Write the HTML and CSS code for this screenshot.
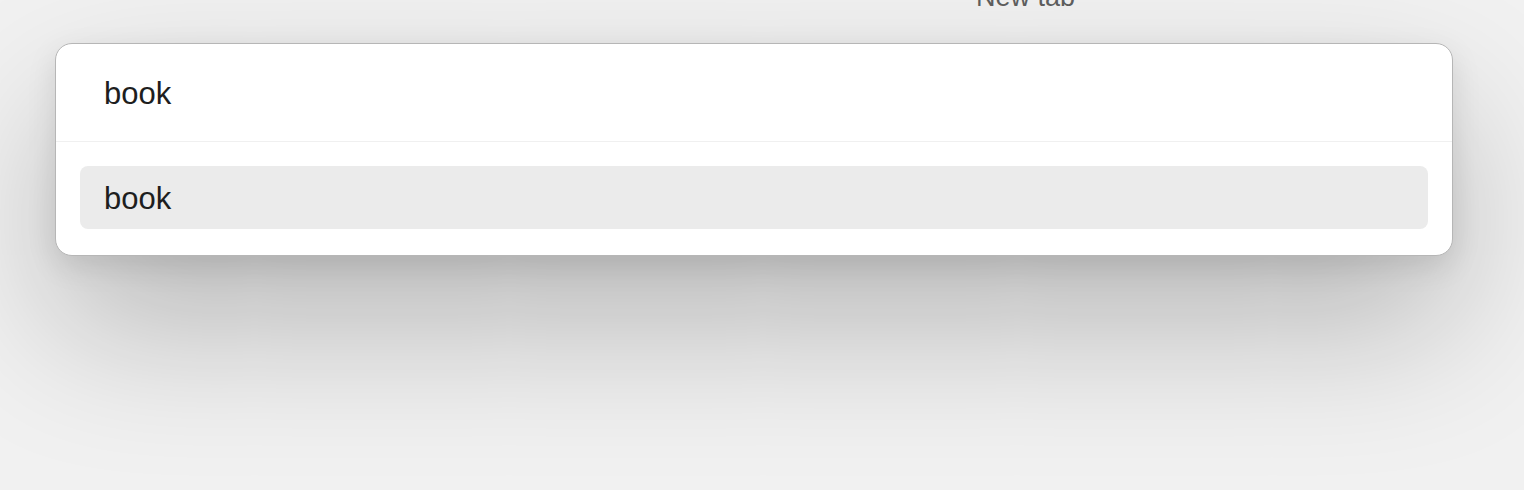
FILE: index.html
```html
<!DOCTYPE html>
<html>
<head>
<meta charset="utf-8">
<link rel="stylesheet" href="styles.css">
</head>
<body>
<div class="page">
  <div class="tabbar"><span class="tab-title">New tab</span></div>
</div>
<div class="palette">
  <div class="palette-input">book</div>
  <div class="palette-list">
    <div class="palette-item selected">book</div>
  </div>
</div>
</body>
</html>
```
FILE: styles.css
```css
html, body {
  margin: 0;
  padding: 0;
  width: 1524px;
  height: 490px;
  overflow: hidden;
  background: #f1f1f1;
  font-family: "Liberation Sans", Arial, sans-serif;
}
.page {
  width: 100%;
  height: 100%;
}
.tabbar {
  display: flex;
  justify-content: flex-start;
  padding-left: 976px;
  margin-top: -18px;
  height: 30px;
}
.tab-title {
  font-size: 27px;
  line-height: 30px;
  color: #5f5f5f;
}
.palette {
  position: absolute;
  top: 43px;
  left: 55px;
  width: 1396px;
  background: #ffffff;
  border: 1px solid #b6b6b6;
  border-radius: 17px;
  box-shadow: 0 70px 150px rgba(0, 0, 0, 0.24), 0 10px 30px rgba(0, 0, 0, 0.1);
  overflow: hidden;
}
.palette-input {
  height: 98px;
  box-sizing: border-box;
  padding: 3px 48px 0;
  display: flex;
  align-items: center;
  font-size: 31px;
  color: #1e1e1e;
  border-bottom: 1px solid #f0f0f0;
}
.palette-list {
  padding: 24px 24px 26px;
}
.palette-item {
  height: 63px;
  box-sizing: border-box;
  padding: 2px 24px 0;
  display: flex;
  align-items: center;
  font-size: 31px;
  color: #1e1e1e;
  border-radius: 8px;
}
.palette-item.selected {
  background: #ebebeb;
}
```
